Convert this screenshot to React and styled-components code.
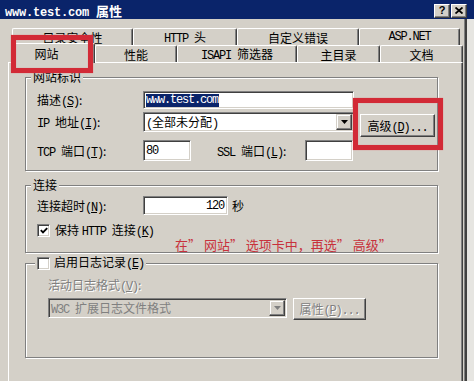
import React from 'react';
import styled, { createGlobalStyle } from 'styled-components';

const GlobalStyle = createGlobalStyle`
  html, body { margin: 0; padding: 0; }
  body {
    background: #e6e5e1;
    font-family: "Noto Sans CJK SC", "Liberation Sans", sans-serif;
  }
`;

const Screen = styled.div`
  width: 474px;
  height: 381px;
  position: relative;
  overflow: hidden;
  background: #e6e5e1;
  font-size: 12px;
  color: #000;
`;

const TitleBar = styled.div`
  height: 19px;
  background: #0a246a;
  display: flex;
  align-items: center;
  padding: 2px 7px 0 5px;
  box-sizing: border-box;
`;

const TitleText = styled.div`
  color: #fff;
  font-weight: bold;
  font-size: 13px;
  white-space: nowrap;
`;

const TitleLat = styled.span`
  font-family: "Liberation Mono", monospace;
  font-size: 12px;
  font-weight: bold;
  letter-spacing: -0.2px;
`;

const CapButtons = styled.div`
  margin-left: auto;
  display: flex;
  gap: 1px;
`;

const CapButton = styled.div`
  width: 16px;
  height: 14px;
  box-sizing: border-box;
  background: #d4d0c8;
  border: 1px solid;
  border-color: #fff #404040 #404040 #fff;
  box-shadow: inset -1px -1px 0 #808080;
  display: flex;
  align-items: center;
  justify-content: center;
  font-family: "Liberation Sans", sans-serif;
  font-weight: bold;
  font-size: 11px;
  line-height: 1;
`;

const Body = styled.div`
  width: 467px;
  height: 362px;
  box-sizing: border-box;
  background: #d4d0c8;
  border-right: 2px solid #404040;
  box-shadow: inset -1px 0 0 #808080;
  padding: 9px 2px 0 8px;
  display: flex;
  flex-direction: column;
`;

const TabRow = styled.div`
  display: flex;
  align-items: flex-end;
  height: 17px;
  padding-left: 4px;
`;

const Tab = styled.div`
  box-sizing: border-box;
  width: ${p => p.$w}px;
  height: ${p => (p.$active ? 20 : 17)}px;
  margin-bottom: ${p => (p.$active ? -1 : 0)}px;
  padding-right: ${p => (p.$active ? 14 : 0)}px;
  position: relative;
  z-index: ${p => (p.$active ? 2 : 0)};
  background: #d4d0c8;
  border-top: 1px solid #fff;
  border-left: 1px solid #fff;
  border-right: 1px solid #404040;
  box-shadow: inset -1px 0 0 #808080;
  border-radius: 2px 2px 0 0;
  display: flex;
  align-items: center;
  justify-content: center;
  white-space: nowrap;
  font-size: 12px;
`;

const Panel = styled.div`
  flex: 1;
  border-top: 1px solid #fff;
  border-left: 1px solid #fff;
  border-right: 1px solid #404040;
  box-shadow: inset -1px 0 0 #808080;
  padding: 7px 0 0 16px;
`;

const Group = styled.fieldset`
  width: 413px;
  box-sizing: border-box;
  margin: ${p => p.$mt}px 0 0 0;
  padding: 0;
  border: 1px solid #808080;
  box-shadow: 1px 1px 0 #fff, inset 1px 1px 0 #fff;
  min-inline-size: 0;
`;

const Legend = styled.legend`
  margin-left: ${p => p.$ml}px;
  padding: 0 2px;
  line-height: 14px;
  height: 14px;
  background: #d4d0c8;
  display: flex;
  align-items: center;
  gap: 4px;
  white-space: nowrap;
`;

const GroupBody = styled.div`
  padding: 0 0 ${p => p.$pb}px ${p => p.$indent}px;
`;

const Row = styled.div`
  display: flex;
  align-items: ${p => (p.$top ? 'flex-start' : 'center')};
  height: ${p => p.$h}px;
  margin-top: ${p => p.$mt}px;
  white-space: nowrap;
`;

const Label = styled.span`
  flex: none;
  width: ${p => (p.$w ? `${p.$w}px` : 'auto')};
  margin-left: ${p => p.$ml || 0}px;
  color: ${p => (p.$disabled ? '#808080' : '#000')};
  text-shadow: ${p => (p.$disabled ? '1px 1px 0 #fff' : 'none')};
`;

const Lat = styled.span`
  font-family: "Liberation Mono", "DejaVu Sans Mono", monospace;
  font-size: 12px;
  letter-spacing: -1.2px;
`;

const Field = styled.div`
  flex: none;
  box-sizing: border-box;
  width: ${p => p.$w}px;
  height: ${p => p.$h}px;
  margin-left: ${p => p.$ml || 0}px;
  background: ${p => (p.$disabled ? '#d4d0c8' : '#fff')};
  color: ${p => (p.$disabled ? '#808080' : '#000')};
  border: 1px solid;
  border-color: #808080 #fff #fff #808080;
  box-shadow: inset 1px 1px 0 #404040, inset -1px -1px 0 #d4d0c8;
  display: flex;
  align-items: center;
  justify-content: ${p => (p.$right ? 'flex-end' : 'flex-start')};
  padding: 0 ${p => (p.$select ? 1 : 3)}px 0 2px;
  overflow: hidden;
  white-space: nowrap;
`;

const Selected = styled.span`
  background: #0a246a;
  color: #fff;
  font-family: "Liberation Mono", monospace;
  font-size: 12px;
  letter-spacing: -1.2px;
  line-height: 13px;
  padding-right: 1px;
`;

const DropBtn = styled.span`
  margin-left: auto;
  width: 16px;
  height: 16px;
  flex: none;
  box-sizing: border-box;
  background: #d4d0c8;
  border: 1px solid;
  border-color: #d4d0c8 #404040 #404040 #d4d0c8;
  box-shadow: inset -1px -1px 0 #808080, inset 1px 1px 0 #fff;
  display: flex;
  align-items: center;
  justify-content: center;
`;

const Btn = styled.button`
  flex: none;
  box-sizing: border-box;
  width: ${p => p.$w}px;
  height: ${p => p.$h}px;
  margin: ${p => p.$mt || 0}px 0 0 ${p => p.$ml || 0}px;
  padding: 0;
  background: #d4d0c8;
  border: 1px solid;
  border-color: #fff #404040 #404040 #fff;
  box-shadow: inset -1px -1px 0 #808080;
  font-family: inherit;
  font-size: 12px;
  color: ${p => (p.$disabled ? '#808080' : '#000')};
  text-shadow: ${p => (p.$disabled ? '1px 1px 0 #fff' : 'none')};
  white-space: nowrap;
`;

const Check = styled.span`
  flex: none;
  width: 13px;
  height: 13px;
  box-sizing: border-box;
  background: #fff;
  border: 1px solid;
  border-color: #808080 #fff #fff #808080;
  box-shadow: inset 1px 1px 0 #404040, inset -1px -1px 0 #d4d0c8;
  display: inline-flex;
  align-items: center;
  justify-content: center;
  margin-right: ${p => p.$mr || 0}px;
`;

const Note = styled.span`
  margin-left: 138px;
  color: #c8323c;
  font-size: 13px;
`;

const Callout = styled.div`
  position: absolute;
  left: ${p => p.$x}px;
  top: ${p => p.$y}px;
  width: ${p => p.$w}px;
  height: ${p => p.$h}px;
  box-sizing: border-box;
  border: 5px solid #d22a36;
  box-shadow: 0 0 1px #e07078, inset 0 0 1px #e07078;
  z-index: 5;
  pointer-events: none;
`;

const NB = '\u00a0';

const Key = ({ k }) => (
  <Lat>
    (<u>{k}</u>)
  </Lat>
);

const Arrow = ({ color = '#000' }) => (
  <svg width="7" height="4" viewBox="0 0 7 4">
    <path d="M0 0h7L3.5 4z" fill={color} />
  </svg>
);

const backTabs = [
  { label: '目录安全性', w: 121 },
  { label: <span><Lat>HTTP{NB}</Lat>头</span>, w: 104 },
  { label: '自定义错误', w: 122 },
  { label: <Lat>ASP.NET</Lat>, w: 101 },
];

const frontTabs = [
  { label: '网站', w: 83, active: true },
  { label: '性能', w: 82 },
  { label: <span><Lat>ISAPI{NB}</Lat>筛选器</span>, w: 120 },
  { label: '主目录', w: 83 },
  { label: '文档', w: 83 },
];

export default function App() {
  return (
    <Screen>
      <GlobalStyle />
      <TitleBar>
        <TitleText>
          <TitleLat>www.test.com{NB}</TitleLat>属性
        </TitleText>
        <CapButtons>
          <CapButton>?</CapButton>
          <CapButton>
            <svg width="8" height="7" viewBox="0 0 8 7">
              <path d="M0.5 0.5L7.5 6.5M7.5 0.5L0.5 6.5" stroke="#000" strokeWidth="1.8" />
            </svg>
          </CapButton>
        </CapButtons>
      </TitleBar>

      <Body>
        <TabRow>
          {backTabs.map((t, i) => (
            <Tab key={i} $w={t.w}>{t.label}</Tab>
          ))}
        </TabRow>
        <TabRow>
          {frontTabs.map((t, i) => (
            <Tab key={i} $w={t.w} $active={t.active}>{t.label}</Tab>
          ))}
        </TabRow>

        <Panel>
          <Group $mt={0}>
            <Legend $ml={5}>网站标识</Legend>
            <GroupBody $indent={11} $pb={9}>
              <Row $h={18} $mt={7}>
                <Label $w={106}>描述<Key k="S" />:</Label>
                <Field $w={211} $h={18}>
                  <Selected>www.test.com</Selected>
                </Field>
              </Row>
              <Row $h={22} $mt={3} $top>
                <Label $w={106} style={{ lineHeight: '20px' }}>
                  <Lat>IP{NB}</Lat>地址<Key k="I" />:
                </Label>
                <Field $w={211} $h={20} $select>
                  <span><Lat>(</Lat>全部未分配<Lat>)</Lat></span>
                  <DropBtn><Arrow /></DropBtn>
                </Field>
                <Btn $w={75} $h={23} $mt={2} $ml={6}>
                  高级<Key k="D" /><Lat>...</Lat>
                </Btn>
              </Row>
              <Row $h={21} $mt={6}>
                <Label $w={106}>
                  <Lat>TCP{NB}</Lat>端口<Key k="T" />:
                </Label>
                <Field $w={48} $h={21}>
                  <Lat>80</Lat>
                </Field>
                <Label $ml={26} $w={88}>
                  <Lat>SSL{NB}</Lat>端口<Key k="L" />:
                </Label>
                <Field $w={48} $h={21} />
              </Row>
            </GroupBody>
          </Group>

          <Group $mt={7}>
            <Legend $ml={5}>连接</Legend>
            <GroupBody $indent={11} $pb={1}>
              <Row $h={19} $mt={4}>
                <Label $w={106}>连接超时<Key k="N" />:</Label>
                <Field $w={85} $h={19} $right>
                  <Lat>120</Lat>
                </Field>
                <Label $ml={4}>秒</Label>
              </Row>
              <Row $h={14} $mt={8}>
                <Check $mr={5}>
                  <svg width="8" height="7" viewBox="0 0 8 7">
                    <path d="M0.8 3.2L3 5.4L7.2 1.2" fill="none" stroke="#000" strokeWidth="1.9" />
                  </svg>
                </Check>
                <Label>
                  保持{NB}<Lat>HTTP{NB}</Lat>连接<Key k="K" />
                </Label>
              </Row>
              <Row $h={14} $mt={0}>
                <Note>在” 网站” 选项卡中，再选” 高级”</Note>
              </Row>
            </GroupBody>
          </Group>

          <Group $mt={3}>
            <Legend $ml={9}>
              <Check />
              <span>启用日志记录<Key k="E" /></span>
            </Legend>
            <GroupBody $indent={22} $pb={37}>
              <Row $h={14} $mt={8}>
                <Label $disabled>活动日志格式<Key k="V" />:</Label>
              </Row>
              <Row $h={22} $mt={6} $top>
                <Field $w={239} $h={20} $select $disabled>
                  <span><Lat>W3C{NB}</Lat>扩展日志文件格式</span>
                  <DropBtn><Arrow color="#808080" /></DropBtn>
                </Field>
                <Btn $w={73} $h={22} $ml={6} $disabled>
                  属性<Key k="P" /><Lat>...</Lat>
                </Btn>
              </Row>
            </GroupBody>
          </Group>
        </Panel>
      </Body>

      <Callout $x={11} $y={35} $w={82} $h={38} />
      <Callout $x={353} $y={98} $w={90} $h={52} />
    </Screen>
  );
}
